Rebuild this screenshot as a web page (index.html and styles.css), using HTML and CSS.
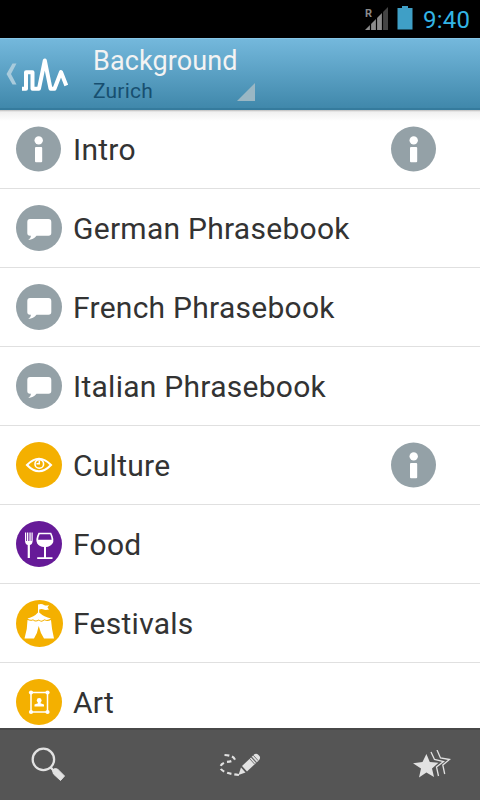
FILE: index.html
```html
<!DOCTYPE html>
<html lang="en">
<head>
<meta charset="utf-8">
<title>Background</title>
<link rel="stylesheet" href="styles.css">
</head>
<body>
<svg class="defs" width="0" height="0">
  <symbol id="info" viewBox="0 0 46 46">
    <circle cx="22.5" cy="23" r="22.5" fill="#94a1a7"/>
    <circle cx="22.7" cy="14.400" r="4.2" fill="#fff"/>
    <rect x="19" y="21" width="7.2" height="15.3" rx="1" fill="#fff"/>
  </symbol>
  <symbol id="speech" viewBox="0 0 46 46">
    <circle cx="23" cy="23" r="23" fill="#94a1a7"/>
    <path d="M14 14H32.500Q35.300 14 35.300 17V28Q35.300 30.700 32.500 30.700H20.500Q17.500 34.500 12.300 35Q15 33 15 30.700H14Q11.300 30.700 11.300 28V17Q11.300 14 14 14Z" fill="#fff"/>
  </symbol>
</svg>
<div class="screen">
  <div class="status">
    <svg class="signal" width="24" height="24" viewBox="0 0 24 24">
      <path d="M0 23L17 6V23Z" fill="#8b8b8b"/>
      <path d="M18 5L23 0V23H18Z" fill="#444"/>
      <path d="M5.500 14V24M11.500 9V24M17.500 3V24" stroke="#000" stroke-width="1.200"/>
      <text class="roam" x="0" y="10">R</text>
    </svg>
    <svg class="battery" width="16" height="24" viewBox="0 0 16 24"><path d="M5 0H11V2H15.500V23.500H.5V2H5Z" fill="#3f9fc6"/></svg>
    <span class="clock">9:40</span>
  </div>
  <header class="bar">
    <svg class="logo" width="72" height="70" viewBox="0 0 72 70">
      <path d="M12.500 24.500H16.500L11 35L16.500 45.500H12.500L6.500 35Z" fill="#a9cbdc"/>
      <path d="M22 49.700H26V33.200H32.500V49.700H39L44.800 21.500L50.500 49.700H54.500L61 33L66.300 46.500" fill="none" stroke="#fff" stroke-width="4" stroke-linejoin="round"/>
    </svg>
    <div class="titles">
      <div class="title">Background</div>
      <div class="sub">Zurich</div>
    </div>
    <svg class="caret" width="18" height="18" viewBox="0 0 18 18"><path d="M18 0V18H0Z" fill="#9ab7c4"/></svg>
  </header>
  <main class="list">
    <div class="row"><svg class="icon"><use href="#info"/></svg><span class="label">Intro</span><svg class="icon end"><use href="#info"/></svg></div>
    <div class="row"><svg class="icon"><use href="#speech"/></svg><span class="label">German Phrasebook</span></div>
    <div class="row"><svg class="icon"><use href="#speech"/></svg><span class="label">French Phrasebook</span></div>
    <div class="row"><svg class="icon"><use href="#speech"/></svg><span class="label">Italian Phrasebook</span></div>
    <div class="row">
      <svg class="icon" viewBox="0 0 46 46">
        <circle cx="23" cy="23" r="23" fill="#f4b000"/>
        <path d="M11 23Q23 10.500 35 23Q23 35.500 11 23Z" fill="none" stroke="#fff" stroke-width="2.100"/>
        <circle cx="23.300" cy="21.900" r="4.300" fill="none" stroke="#fff" stroke-width="1.600"/>
        <path d="M23.300 18.500V21.700H20.500" fill="none" stroke="#fff" stroke-width="1.500"/>
      </svg>
      <span class="label">Culture</span><svg class="icon end"><use href="#info"/></svg>
    </div>
    <div class="row">
      <svg class="icon" viewBox="0 0 46 46">
        <circle cx="23" cy="23" r="23" fill="#661a98"/>
        <path d="M9 11.500V19Q9 23.500 11.700 24V37H13.900V24Q16.700 23.500 16.700 19V11.500H15.500V20H14.700V11.500H13.400V20H12.300V11.500H11V20H10.200V11.500Z" fill="#fff"/>
        <path d="M22.500 11.700H35.200Q38.800 19 36.500 22.500Q34 25.800 30 26V36.300H36.500V38H21.200V36.300H28V26Q23.500 25.800 21.200 22.500Q19 18.500 22.500 11.700Z" fill="#fff"/>
        <path d="M23.600 13.200H34.200Q35.500 16 35.600 18.700H22.100Q22.300 16 23.600 13.200Z" fill="#661a98"/>
      </svg>
      <span class="label">Food</span>
    </div>
    <div class="row">
      <svg class="icon tent" viewBox="0 0 47 47">
        <circle cx="23.500" cy="23.500" r="23.500" fill="#f4b000"/>
        <path d="M22 4.500Q26 3.500 28 5Q30 6 33 5L31.500 7.500L33 9.500Q29 10.500 27 9.200Q25 8.500 23.200 9.500V12.500Q28 17 35 18.500Q31 21 28.500 19.200Q25.500 22 22.700 19.500Q19.500 21.500 17 19.200Q14 20.500 11.500 18.500Q18 17 22 12.500Z" fill="#fff"/>
        <path d="M11.500 20Q14.500 21.500 17 20.300Q19.500 22.500 22.700 20.600Q25.500 22.800 28.500 20.300Q31.500 21.800 35 20Q35.500 28 38 38.500H28Q24.500 33.500 22.700 26Q21.500 33.500 18 38.500H8.500Q11.500 29 11.500 20Z" fill="#fff"/>
      </svg>
      <span class="label">Festivals</span>
    </div>
    <div class="row">
      <svg class="icon" viewBox="0 0 46 46">
        <circle cx="23" cy="23" r="23" fill="#f4b000"/>
        <rect x="15" y="13.500" width="16.500" height="19.500" fill="none" stroke="#fff" stroke-width="1.500"/>
        <g fill="#fff"><circle cx="15" cy="13.500" r="2.100"/><circle cx="31.500" cy="13.500" r="2.100"/><circle cx="15" cy="33" r="2.100"/><circle cx="31.500" cy="33" r="2.100"/><circle cx="23.200" cy="21.500" r="2.400"/><path d="M22 22H24.500V24.200L28 25.500V27.500H18.500V25.500L22 24.200Z"/></g>
      </svg>
      <span class="label">Art</span>
    </div>
  </main>
  <footer class="tools">
    <svg width="36" height="36" viewBox="0 0 36 36">
      <circle cx="12.400" cy="12.400" r="10.700" fill="none" stroke="#e2e2e2" stroke-width="2.300"/>
      <path d="M19.700 20.500L23 24" stroke="#e2e2e2" stroke-width="2.500"/>
      <path d="M21.500 23.500Q23 20.500 26.500 22L33.500 29L29.500 33.500L22.500 27Z" fill="#e2e2e2" stroke="#e2e2e2" stroke-linejoin="round"/>
    </svg>
    <svg width="42" height="26" viewBox="0 0 42 26">
      <path d="M5.500 3Q14 3.500 15.500 7Q14 9.500 7 10Q0 12.500 2 17Q5 21.500 20 23" fill="none" stroke="#e2e2e2" stroke-width="2.200" stroke-dasharray="4.500 3"/>
      <path d="M19.500 23L22 15.500L26.500 20.500Z" fill="#e2e2e2"/>
      <path d="M23 14L32 5.500L37 11L28 19.500Z" fill="#e2e2e2"/>
      <path d="M32.500 5L34.500 3Q37 .5 39.500 3Q42.500 5.500 39.800 8.500L37.500 10.500Z" fill="#e2e2e2"/>
      <path d="M30.500 6.500L35.500 12M32.500 4.800L37.500 10.300M34.200 3.200L39.200 8.700" stroke="#555" stroke-width=".8"/>
    </svg>
    <svg width="38" height="30" viewBox="0 0 38 30">
      <path d="M13.400 4L16.800 12L25.500 12.700L19 18.500L21 27L13.400 22.500L6 27.500L8 18.500L0 13.200L9.500 12Z" fill="#e2e2e2"/>
      <path d="M18 2L21.500 9.500L30.500 11.500L23.500 17L25.500 26M24 0L27.500 8L36.500 9.500L29.800 15L31.700 24" fill="none" stroke="#e2e2e2" stroke-width="1.300"/>
    </svg>
  </footer>
</div>
</body>
</html>
```
FILE: styles.css
```css
body {
  margin: 0;
  font-family: Roboto, "Liberation Sans", sans-serif;
}
.defs { position: absolute; }
.screen {
  width: 480px;
  height: 800px;
  overflow: hidden;
  display: flex;
  flex-direction: column;
  background: #fff;
}
.status {
  height: 38px;
  flex: none;
  box-sizing: border-box;
  display: flex;
  align-items: flex-start;
  justify-content: flex-end;
  padding: 7px 9px 0 0;
  background: #000;
}
.roam { font-size: 11px; font-weight: 700; fill: #8b8b8b; }
.battery { margin-left: 8px; margin-top: -1px; }
.clock {
  width: 48px;
  margin-left: 10px;
  font-size: 24px;
  line-height: 26px;
  letter-spacing: .2px;
  white-space: nowrap;
  color: #33b5e5;
}
.bar {
  height: 72px;
  flex: none;
  box-sizing: border-box;
  display: flex;
  border-top: 1px solid #86c5e6;
  border-bottom: 2px solid #357b9d;
  background: linear-gradient(#74b8dc, #4088ab);
}
.titles { width: 144px; margin-left: 21px; padding-top: 6px; white-space: nowrap; }
.title {
  font-size: 27px;
  line-height: 32px;
  letter-spacing: .1px;
  color: #f3f3f3;
}
.sub {
  padding-top: 1px;
  font-size: 21px;
  line-height: 26px;
  letter-spacing: .2px;
  color: #174f70;
}
.caret { margin-top: 44px; }
.list {
  height: 618px;
  flex: none;
  overflow: hidden;
  background: linear-gradient(#bbb, #f0f0f0 2px, #fff 11px);
}
.row {
  height: 79px;
  box-sizing: border-box;
  display: flex;
  align-items: center;
  padding: 0 44px 0 16px;
  border-bottom: 1px solid #e0e0e0;
}
.icon { width: 46px; height: 46px; flex: none; }
.tent { width: 47px; height: 47px; margin-right: -1px; }
.label {
  margin-left: 11px;
  padding-top: 2px;
  font-size: 30px;
  line-height: 36px;
  letter-spacing: .27px;
  white-space: nowrap;
  color: #333;
}
.end { margin-left: auto; margin-right: -1px; }
.tools {
  height: 72px;
  flex: none;
  box-sizing: border-box;
  display: flex;
  align-items: center;
  justify-content: space-between;
  padding: 0 29px 0 31px;
  border-top: 2px solid #484848;
  background: #555;
}
```
